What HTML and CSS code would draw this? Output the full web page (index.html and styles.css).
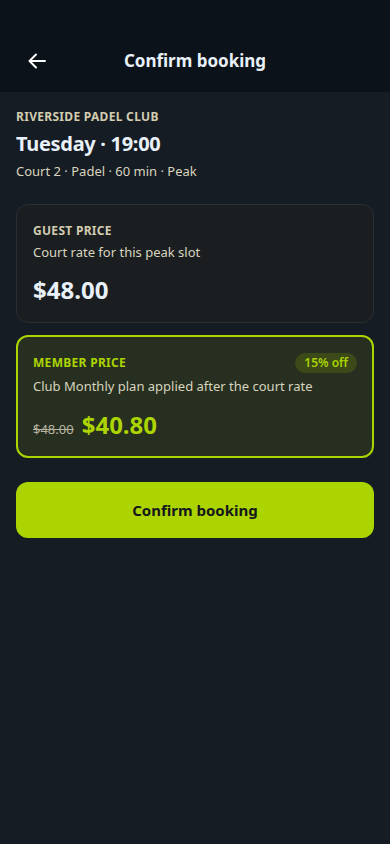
FILE: index.html
```html
<!DOCTYPE html>
<html lang="en">
<head>
<meta charset="utf-8">
<meta name="viewport" content="width=device-width, initial-scale=1">
<title>Confirm booking</title>
<link rel="stylesheet" href="styles.css">
</head>
<body>
<header class="topbar">
  <button class="back" aria-label="Back">
    <svg width="18" height="16" viewBox="0 0 18 16" fill="none" stroke="#ffffff" stroke-width="2" stroke-linecap="round" stroke-linejoin="round"><path d="M17 8H2M8 1.5L1.5 8 8 14.5"/></svg>
  </button>
  <h1 class="topbar-title">Confirm booking</h1>
  <span class="spacer"></span>
</header>
<main class="content">
  <section class="summary">
    <div class="club">RIVERSIDE PADEL CLUB</div>
    <div class="slot">Tuesday · 19:00</div>
    <div class="meta">Court 2 · Padel · 60 min · Peak</div>
  </section>
  <section class="card">
    <div class="card-label">GUEST PRICE</div>
    <div class="card-desc">Court rate for this peak slot</div>
    <div class="price">$48.00</div>
  </section>
  <section class="card card-member">
    <div class="card-head">
      <div class="card-label member-label">MEMBER PRICE</div>
      <span class="badge">15% off</span>
    </div>
    <div class="card-desc">Club Monthly plan applied after the court rate</div>
    <div class="price-row">
      <span class="old">$48.00</span>
      <span class="price member-price">$40.80</span>
    </div>
  </section>
  <button class="cta">Confirm booking</button>
</main>
</body>
</html>
```
FILE: styles.css
```css
* { box-sizing: border-box; }
html, body { margin: 0; padding: 0; }
body {
  background: #161c23;
  font-family: "Noto Sans", "Open Sans", sans-serif;
  color: #e6ecf2;
  min-height: 844px;
}
.topbar {
  height: 92px;
  background: #0c1219;
  display: flex;
  align-items: flex-end;
  padding: 0 16px 11px 16px;
}
.back {
  width: 40px;
  height: 40px;
  background: none;
  border: 0;
  padding: 0 0 0 12px;
  display: flex;
  align-items: center;
  justify-content: flex-start;
  cursor: pointer;
}
.topbar-title {
  flex: 1;
  margin: 0;
  text-align: center;
  font-size: 17px;
  font-weight: 700;
  color: #e8f0f8;
  line-height: 40px;
}
.spacer { width: 40px; }
.content {
  padding: 16px;
  display: flex;
  flex-direction: column;
}
.summary { margin-bottom: 23px; }
.club {
  font-size: 12px;
  font-weight: 700;
  letter-spacing: 0.3px;
  color: #d2ccb0;
  line-height: 18px;
}
.slot {
  font-size: 20px;
  font-weight: 700;
  letter-spacing: -0.3px;
  color: #e8f0f8;
  line-height: 28px;
  margin-top: 4px;
}
.meta {
  font-size: 13px;
  color: #d8d4be;
  line-height: 20px;
  margin-top: 3px;
}
.card {
  background: #1b1e21;
  border: 1px solid #2a2f35;
  border-radius: 12px;
  padding: 17px 16px 16px;
  margin-bottom: 12px;
}
.card-label {
  font-size: 12px;
  font-weight: 700;
  letter-spacing: 0.3px;
  color: #d2ccb0;
  line-height: 18px;
}
.card-desc {
  font-size: 13px;
  color: #d8d4be;
  line-height: 20px;
  margin-top: 2px;
}
.price {
  font-size: 24px;
  font-weight: 700;
  color: #e8f0f8;
  line-height: 32px;
  margin-top: 12px;
}
.card-member {
  background: #262f20;
  border: 2px solid #acd400;
  padding: 16px 15px 15px;
}
.card-member .card-desc { margin-top: 3px; }
.card-head {
  display: flex;
  align-items: center;
  justify-content: space-between;
}
.member-label { color: #acd400; }
.badge {
  background: #3b4a18;
  color: #acd400;
  font-size: 12px;
  font-weight: 600;
  border-radius: 10px;
  padding: 1px 9px;
  line-height: 18px;
}
.price-row {
  display: flex;
  align-items: baseline;
  gap: 8px;
  margin-top: 13px;
}
.old {
  font-size: 13px;
  color: #b8b4a0;
  text-decoration: line-through;
}
.member-price { color: #acd400; margin-top: 0; }
.cta {
  margin-top: 12px;
  height: 56px;
  width: 100%;
  border: 0;
  border-radius: 12px;
  background: #acd400;
  color: #15181c;
  font-family: inherit;
  font-size: 15px;
  font-weight: 700;
  cursor: pointer;
}
```
